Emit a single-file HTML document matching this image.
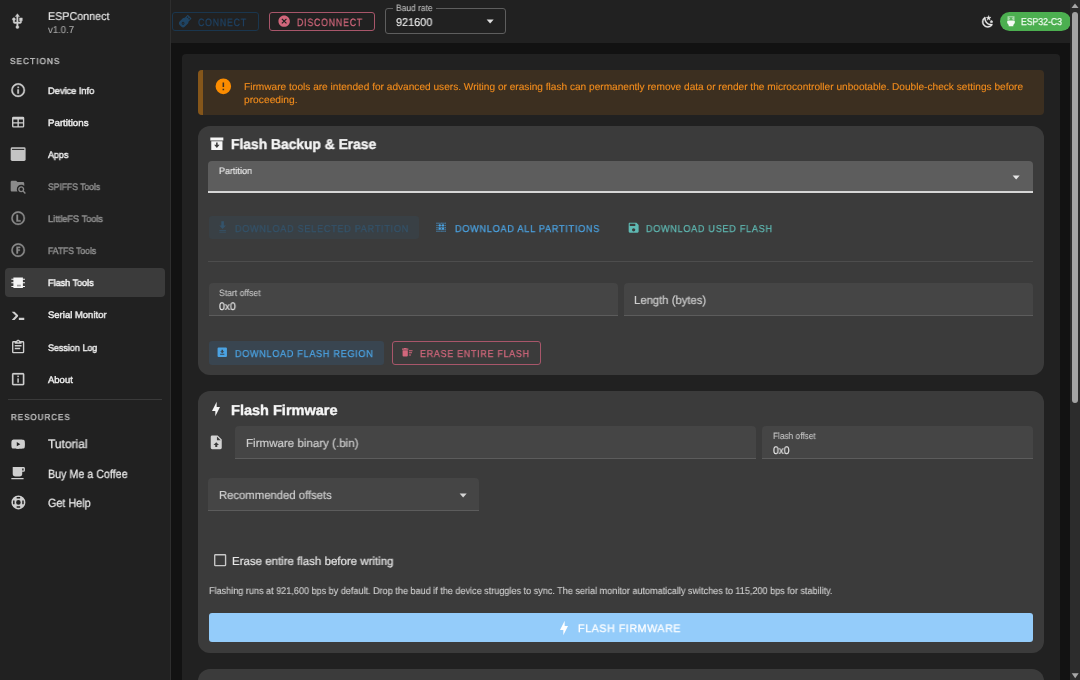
<!DOCTYPE html>
<html><head><meta charset="utf-8">
<style>
*{margin:0;padding:0;box-sizing:border-box}
html,body{width:1080px;height:680px;overflow:hidden;background:#121212;font-family:"Liberation Sans",sans-serif;}
.a{position:absolute}
.t{position:absolute;white-space:nowrap;line-height:1;will-change:transform;text-rendering:geometricPrecision}
svg{position:absolute;display:block;overflow:visible}
</style></head><body>
<!-- sidebar -->
<div class="a" style="left:0;top:0;width:171px;height:680px;background:#212121;border-right:1px solid #2e2e2e"></div>
<!-- app bar -->
<div class="a" style="left:171px;top:0;width:899px;height:43px;background:#212121"></div>
<!-- main -->
<div class="a" style="left:171px;top:43px;width:899px;height:637px;background:#121212"></div>
<div class="a" style="left:182px;top:53.5px;width:877.5px;height:700px;background:#212121;border-radius:4px"></div>

<!-- sidebar content -->
<svg style="left:9.2px;top:12.6px" width="16.8" height="16.8" viewBox="0 0 24 24"><path fill="#cfcfcf" stroke="#cfcfcf" stroke-width="0.6" d="M15,7V11H16V13H13V5H15L12,1L9,5H11V13H8V10.93C8.7,10.56 9.2,9.85 9.2,9C9.2,7.78 8.21,6.8 7,6.8C5.78,6.8 4.8,7.78 4.8,9C4.8,9.85 5.3,10.56 6,10.93V13A2,2 0 0,0 8,15H11V18.05C10.29,18.41 9.8,19.15 9.8,20A2.2,2.2 0 0,0 12,22.2A2.2,2.2 0 0,0 14.2,20C14.2,19.15 13.71,18.41 13,18.05V15H16A2,2 0 0,0 18,13V11H19V7H15Z"/></svg>

<div class="a" style="left:5px;top:268px;width:160px;height:29px;background:#3b3b3b;border-radius:4px"></div>

<!-- nav icons: center y = 90 + 32*i, box 16.3 -->
<svg style="left:10px;top:81.85px" width="16.3" height="16.3" viewBox="0 0 24 24"><path fill="#cfcfcf" stroke="#cfcfcf" stroke-width="0.6" d="M11,9H13V7H11M12,20C7.59,20 4,16.41 4,12C4,7.59 7.59,4 12,4C16.41,4 20,7.59 20,12C20,16.41 16.41,20 12,20M12,2A10,10 0 0,0 2,12A10,10 0 0,0 12,22A10,10 0 0,0 22,12A10,10 0 0,0 12,2M11,17H13V11H11V17Z"/></svg>
<svg style="left:10px;top:113.95px" width="16.3" height="16.3" viewBox="0 0 24 24"><path fill="#cfcfcf" d="M5,4H19A2,2 0 0,1 21,6V18A2,2 0 0,1 19,20H5A2,2 0 0,1 3,18V6A2,2 0 0,1 5,4M5,8V12H11V8H5M13,8V12H19V8H13M5,14V18H11V14H5M13,14V18H19V14H13Z"/></svg>
<svg style="left:10px;top:146.05px" width="16.3" height="16.3" viewBox="0 0 24 24"><rect x="1" y="1.8" width="22" height="20.4" rx="2.2" fill="#c4c4c4"/><rect x="3" y="4.2" width="18" height="1.6" fill="#2a2a2a"/></svg>
<svg style="left:10px;top:178.15px" width="16.3" height="16.3" viewBox="0 0 24 24"><path fill="#8a8a8a" d="M16.5,12C19,12 21,14 21,16.5C21,17.38 20.75,18.21 20.31,18.9L23.39,22L22,23.39L18.88,20.32C18.19,20.75 17.37,21 16.5,21C14,21 12,19 12,16.5C12,14 14,12 16.5,12M16.5,14A2.5,2.5 0 0,0 14,16.5A2.5,2.5 0 0,0 16.5,19A2.5,2.5 0 0,0 19,16.5A2.5,2.5 0 0,0 16.5,14M9,4L11,6H19A2,2 0 0,1 21,8V11.81C19.83,10.69 18.25,10 16.5,10A6.5,6.5 0 0,0 10,16.5C10,17.79 10.37,19 11,20H3C1.89,20 1,19.1 1,18V6C1,4.89 1.89,4 3,4H9Z"/></svg>
<svg style="left:10px;top:210.25px" width="16.3" height="16.3" viewBox="0 0 24 24"><path fill="#8a8a8a" stroke="#8a8a8a" stroke-width="0.5" d="M9.5,7H11.8V15H15.5V17H9.5V7M12,2A10,10 0 0,1 22,12A10,10 0 0,1 12,22A10,10 0 0,1 2,12A10,10 0 0,1 12,2M12,4A8,8 0 0,0 4,12A8,8 0 0,0 12,20A8,8 0 0,0 20,12A8,8 0 0,0 12,4Z"/></svg>
<svg style="left:10px;top:242.35px" width="16.3" height="16.3" viewBox="0 0 24 24"><path fill="#8a8a8a" stroke="#8a8a8a" stroke-width="0.5" d="M9.5,7H15V9H11.8V11H14.5V13H11.8V17H9.5V7M12,2A10,10 0 0,1 22,12A10,10 0 0,1 12,22A10,10 0 0,1 2,12A10,10 0 0,1 12,2M12,4A8,8 0 0,0 4,12A8,8 0 0,0 12,20A8,8 0 0,0 20,12A8,8 0 0,0 12,4Z"/></svg>
<svg style="left:10px;top:274.45px" width="16.3" height="16.3" viewBox="0 0 24 24"><path fill="#f5f5f5" d="M5,5.2H19V6.9H22V8.5H19V12.2H22V13.8H19V17.5H22V19.1H19V20.8H5V19.1H2V17.5H5V13.8H2V12.2H5V8.5H2V6.9H5Z"/><rect x="10.3" y="15.8" width="5.7" height="2.5" fill="#a0a0a0"/></svg>
<svg style="left:10px;top:306.55px" width="16.3" height="16.3" viewBox="0 0 24 24"><path fill="#cfcfcf" d="M13,19V16H21V19H13M8.5,13L2.47,7H6.71L11.67,11.95C12.25,12.5 12.25,13.5 11.67,14.05L6.74,19H2.5L8.5,13Z"/></svg>
<svg style="left:10px;top:338.65px" width="16.3" height="16.3" viewBox="0 0 24 24"><path fill="#cfcfcf" d="M19,3H14.82C14.4,1.84 13.3,1 12,1C10.7,1 9.6,1.84 9.18,3H5A2,2 0 0,0 3,5V19A2,2 0 0,0 5,21H19A2,2 0 0,0 21,19V5A2,2 0 0,0 19,3M12,3A1,1 0 0,1 13,4A1,1 0 0,1 12,5A1,1 0 0,1 11,4A1,1 0 0,1 12,3M7,7H17V5H19V19H5V5H7V7M17,11H7V9H17V11M15,15H7V13H15V15Z"/></svg>
<svg style="left:10px;top:370.75px" width="16.3" height="16.3" viewBox="0 0 24 24"><path fill="#cfcfcf" stroke="#cfcfcf" stroke-width="0.4" d="M13,9H11V7H13M13,17H11V11H13M19,3H5A2,2 0 0,0 3,5V19A2,2 0 0,0 5,21H19A2,2 0 0,0 21,19V5A2,2 0 0,0 19,3M19,19H5V5H19V19Z"/></svg>

<div class="a" style="left:7.5px;top:399px;width:154.5px;height:1px;background:#3a3a3a"></div>
<svg style="left:10px;top:435.7px" width="16.3" height="16.3" viewBox="0 0 24 24"><path fill="#cfcfcf" d="M10,15L15.19,12L10,9V15M21.56,7.17C21.69,7.64 21.78,8.27 21.84,9.07C21.91,9.87 21.94,10.56 21.94,11.16L22,12C22,14.19 21.84,15.8 21.56,16.83C21.31,17.73 20.73,18.31 19.83,18.56C19.36,18.69 18.5,18.78 17.18,18.84C15.88,18.91 14.69,18.94 13.59,18.94L12,19C7.81,19 5.2,18.84 4.17,18.56C3.27,18.31 2.69,17.73 2.44,16.83C2.31,16.36 2.22,15.73 2.16,14.93C2.09,14.13 2.06,13.44 2.06,12.84L2,12C2,9.81 2.16,8.2 2.440,7.17C2.69,6.27 3.27,5.69 4.17,5.44C4.64,5.31 5.5,5.22 6.82,5.16C8.12,5.09 9.310,5.06 10.41,5.06L12,5C16.19,5 18.8,5.16 19.83,5.44C20.73,5.69 21.31,6.27 21.56,7.17Z"/></svg>
<svg style="left:10px;top:465px" width="16.3" height="16.3" viewBox="0 0 24 24"><path fill="#cfcfcf" d="M2,21H20V19H2M20,8H18V5H20M20,3H4V13A4,4 0 0,0 8,17H14A4,4 0 0,0 18,13V10H20A2,2 0 0,0 22,8V5C22,3.89 21.1,3 20,3Z"/></svg>
<svg style="left:9.75px;top:494.2px" width="16.8" height="16.8" viewBox="0 0 24 24"><path fill="#cfcfcf" fill-rule="evenodd" d="M12,2A10,10 0 1,1 12,22A10,10 0 1,1 12,2Z M12,8.7A3.3,3.3 0 1,0 12,15.3A3.3,3.3 0 1,0 12,8.7Z M9.5,4.4H14.5V6.5H9.5Z M9.5,17.5H14.5V19.6H9.5Z M4.4,9.4H6.5V14.6H4.4Z M17.5,9.4H19.6V14.6H17.5Z"/></svg>

<!-- app bar content -->
<div class="a" style="left:171.5px;top:12.2px;width:87px;height:18.7px;border:1px solid #1a364e;border-radius:3px"></div>
<svg style="left:177.2px;top:12.6px" width="16.3" height="16.3" viewBox="0 0 24 24"><g transform="rotate(45 12 12)"><rect x="6.6" y="8.5" width="10.8" height="13.2" rx="4" fill="#1f4463"/><rect x="8" y="2.6" width="8" height="7" rx="0.6" fill="#1f4463"/><rect x="9.4" y="4.4" width="1.9" height="1.9" fill="#212121"/><rect x="12.7" y="4.4" width="1.9" height="1.9" fill="#212121"/><circle cx="12" cy="16.3" r="2.1" fill="#212121"/><circle cx="12" cy="16.3" r="0.9" fill="#1f4463"/></g></svg>

<div class="a" style="left:269px;top:12px;width:106px;height:19px;border:1px solid #a8566a;border-radius:3px"></div>
<svg style="left:276px;top:13.2px" width="16.3" height="16.3" viewBox="0 0 24 24"><path fill="#d2677c" d="M12,3.6C16.64,3.6 20.4,7.36 20.4,12C20.4,16.64 16.64,20.4 12,20.4C7.36,20.4 3.6,16.64 3.6,12C3.6,7.36 7.36,3.6 12,3.6M14.8,8L12,10.8L9.2,8L8,9.2L10.8,12L8,14.8L9.2,16L12,13.2L14.8,16L16,14.8L13.2,12L16,9.2Z"/></svg>

<div class="a" style="left:385.3px;top:8.1px;width:120.5px;height:26.3px;border:1px solid #5e5e5e;border-radius:3px"></div>
<div class="a" style="left:393px;top:6px;width:42.5px;height:4px;background:#212121"></div>
<svg style="left:481.5px;top:13.3px" width="16.3" height="16.3" viewBox="0 0 24 24"><path fill="#dedede" d="M6.8,9.7L12,15.3L17.2,9.7H6.8Z"/></svg>

<svg style="left:980.6px;top:14.5px" width="13.6" height="13.6" viewBox="0 0 24 24"><path fill="#ececec" stroke="#ececec" stroke-width="0.7" d="M17.75,4.09L15.22,6.03L16.13,9.09L13.5,7.28L10.87,9.09L11.78,6.03L9.25,4.09L12.44,4L13.5,1L14.56,4L17.75,4.09M21.25,11L19.610,12.25L20.2,14.23L18.5,13.06L16.8,14.23L17.39,12.25L15.75,11L17.81,10.95L18.5,9L19.19,10.95L21.25,11M18.97,15.95C19.8,15.87 20.69,17.05 20.16,17.8C19.84,18.25 19.5,18.67 19.08,19.07C15.17,23 8.84,23 4.94,19.07C1.03,15.17 1.03,8.830 4.94,4.93C5.34,4.53 5.76,4.17 6.21,3.85C6.96,3.32 8.14,4.21 8.06,5.04C7.79,7.9 8.75,10.87 10.95,13.06C13.14,15.26 16.1,16.22 18.97,15.95M17.33,17.970C14.5,17.81 11.7,16.64 9.53,14.5C7.36,12.31 6.2,9.5 6.04,6.68C3.23,9.82 3.34,14.64 6.35,17.66C9.37,20.67 14.19,20.780 17.33,17.97Z"/></svg>

<div class="a" style="left:1000px;top:12px;width:71px;height:19px;background:#4caf50;border-radius:10px"></div>
<svg style="left:1006.6px;top:15.8px" width="8" height="11" viewBox="0 0 8 11"><path fill="#e8f5e8" fill-opacity="0.6" d="M0.5,0.2H7.5V4.9H0.5Z"/><path fill="#4caf50" fill-opacity="0.9" d="M2,1.2H6L4.7,2.6L6,4H2L3.3,2.6Z"/><path fill="#f4faf4" d="M0.2,4.9H7.8V7.1L6.3,8.9V10.3H1.7V8.9L0.2,7.1Z"/></svg>

<!-- scrollbar -->
<div class="a" style="left:1070px;top:0;width:10px;height:680px;background:#2c2c2c"></div>
<svg style="left:1070px;top:0" width="10" height="10" viewBox="0 0 10 10"><path fill="#a8a8a8" d="M1.5,8H8.5L5,3.5Z"/></svg>
<div class="a" style="left:1072.2px;top:11.5px;width:6px;height:391.5px;background:#a3a3a3;border-radius:3px"></div>
<svg style="left:1070px;top:671px" width="10" height="10" viewBox="0 0 10 10"><path fill="#a8a8a8" d="M1.7,2.2H8.7L5.2,7.2Z"/></svg>

<!-- alert -->
<div class="a" style="left:197.8px;top:69.6px;width:845.9px;height:45.5px;background:#3c2f20;border-radius:4px;overflow:hidden"><div class="a" style="left:0;top:0;width:5.3px;height:100%;background:#85561a"></div></div>
<svg style="left:213.6px;top:77.2px" width="18.7" height="18.7" viewBox="0 0 24 24"><path fill="#fb8c00" d="M13,13H11V7H13M13,17H11V15H13M12,2A10,10 0 0,0 2,12A10,10 0 0,0 12,22A10,10 0 0,0 22,12A10,10 0 0,0 12,2Z"/></svg>

<!-- card 1 -->
<div class="a" style="left:197.8px;top:126px;width:845.9px;height:249.2px;background:#3b3b3b;border-radius:12px"></div>
<svg style="left:208.5px;top:134.5px" width="16" height="16" viewBox="0 0 24 24"><path fill="#f5f5f5" d="M2,3.8H21.5V8.2H2Z M3.4,9.5H20.2V22.6H3.4Z"/><path fill="#3b3b3b" d="M10.6,11.2H13V14.6H15.9L11.8,19.4L7.7,14.6H10.6Z"/></svg>

<div class="a" style="left:208.1px;top:160.7px;width:825px;height:32.6px;background:#5d5d5d;border-radius:4px 4px 0 0;border-bottom:2px solid #d6d6d6"></div>
<svg style="left:1007.9px;top:168.9px" width="16.3" height="16.3" viewBox="0 0 24 24"><path fill="#e6e6e6" d="M6.8,9.7L12,15.3L17.2,9.7H6.8Z"/></svg>

<div class="a" style="left:208.7px;top:216.2px;width:210.8px;height:22.6px;background:#394045;border-radius:3px"></div>
<svg style="left:218px;top:220px" width="10" height="14" viewBox="0 0 10 14"><path fill="#34536b" d="M3.3,1.3H5.9V5.5H7.9L4.6,9L1.3,5.5H3.3Z M1.3,9.9H7.9V10.7H1.3Z M1.3,11.8H7.9V12.6H1.3Z"/></svg>
<svg style="left:436.4px;top:222.2px" width="11" height="11" viewBox="0 0 11 11"><g fill="#4ba3e3"><circle cx="1.0" cy="1.2" r="0.6"/><circle cx="1.0" cy="3.3" r="0.6"/><circle cx="1.0" cy="5.3" r="0.6"/><circle cx="1.0" cy="7.2" r="0.6"/><circle cx="1.0" cy="9.2" r="0.6"/><circle cx="3.0" cy="1.2" r="0.6"/><circle cx="3.0" cy="3.3" r="0.6"/><circle cx="3.0" cy="5.3" r="0.6"/><circle cx="3.0" cy="7.2" r="0.6"/><circle cx="3.0" cy="9.2" r="0.6"/><circle cx="5.1" cy="1.2" r="0.6"/><circle cx="5.1" cy="3.3" r="0.6"/><circle cx="5.1" cy="5.3" r="0.6"/><circle cx="5.1" cy="7.2" r="0.6"/><circle cx="5.1" cy="9.2" r="0.6"/><circle cx="7.0" cy="1.2" r="0.6"/><circle cx="7.0" cy="3.3" r="0.6"/><circle cx="7.0" cy="5.3" r="0.6"/><circle cx="7.0" cy="7.2" r="0.6"/><circle cx="7.0" cy="9.2" r="0.6"/><circle cx="9.1" cy="1.2" r="0.6"/><circle cx="9.1" cy="3.3" r="0.6"/><circle cx="9.1" cy="5.3" r="0.6"/><circle cx="9.1" cy="7.2" r="0.6"/><circle cx="9.1" cy="9.2" r="0.6"/><circle cx="3.8" cy="3.5" r="1.15"/><circle cx="7.0" cy="3.5" r="1.15"/><circle cx="3.8" cy="6.7" r="1.15"/><circle cx="7.0" cy="6.7" r="1.15"/></g></svg>
<svg style="left:627.2px;top:220.6px" width="13.3" height="13.3" viewBox="0 0 24 24"><path fill="#5fb9b3" d="M15,9H5V5H15M12,19A3,3 0 0,1 9,16A3,3 0 0,1 12,13A3,3 0 0,1 15,16A3,3 0 0,1 12,19M17,3H5C3.89,3 3,3.9 3,5V19A2,2 0 0,0 5,21H19A2,2 0 0,0 21,19V7L17,3Z"/></svg>

<div class="a" style="left:208.1px;top:261px;width:825px;height:1px;background:#4d4d4d"></div>

<div class="a" style="left:208.5px;top:283px;width:409.7px;height:33px;background:#454545;border-radius:4px 4px 0 0;border-bottom:1.5px solid #5c5c5c"></div>
<div class="a" style="left:623.5px;top:283px;width:409.5px;height:33px;background:#454545;border-radius:4px 4px 0 0;border-bottom:1.5px solid #5c5c5c"></div>

<div class="a" style="left:208.5px;top:341px;width:175.8px;height:23.5px;background:#394550;border-radius:3px"></div>
<svg style="left:216.4px;top:346.3px" width="12.5" height="12.5" viewBox="0 0 24 24"><path fill="#4ba3e3" d="M5,3H19A2,2 0 0,1 21,5V19A2,2 0 0,1 19,21H5A2,2 0 0,1 3,19V5A2,2 0 0,1 5,3M8,17H16V15H8V17M16,10H13.5V7H10.5V10H8L12,14L16,10Z"/></svg>
<div class="a" style="left:392px;top:341px;width:148.5px;height:23.5px;border:1px solid #a8566a;border-radius:3px"></div>
<svg style="left:400.5px;top:345.9px" width="12.6" height="12.6" viewBox="0 0 24 24"><path fill="#d2677c" d="M15,16H19V18H15V16M15,8H22V10H15V8M15,12H21V14H15V12M3,18A2,2 0 0,0 5,20H11A2,2 0 0,0 13,18V8H3V18M14,5H11L10,4H6L5,5H2V7H14V5Z"/></svg>

<!-- card 2 -->
<div class="a" style="left:197.8px;top:391px;width:845.9px;height:261.6px;background:#3b3b3b;border-radius:12px"></div>
<svg style="left:208px;top:401.2px" width="16" height="16" viewBox="0 0 24 24"><path fill="#f5f5f5" d="M11,15H6L13,1V9H18L11,23V15Z"/></svg>
<svg style="left:208.2px;top:433.8px" width="16.5" height="16.5" viewBox="0 0 24 24"><path fill="#d4d4d4" d="M14,2L20,8V20A2,2 0 0,1 18,22H6A2,2 0 0,1 4,20V4A2,2 0 0,1 6,2H14M13,9H18.5L13,3.5V9M12,12L8,16H10.5V19H13.5V16H16L12,12Z"/></svg>

<div class="a" style="left:235.2px;top:426.3px;width:521.1px;height:32.7px;background:#454545;border-radius:4px 4px 0 0;border-bottom:1.5px solid #5c5c5c"></div>
<div class="a" style="left:761.9px;top:426.3px;width:271.1px;height:32.7px;background:#454545;border-radius:4px 4px 0 0;border-bottom:1.5px solid #5c5c5c"></div>

<div class="a" style="left:208.1px;top:478.3px;width:271.2px;height:32.7px;background:#454545;border-radius:4px 4px 0 0;border-bottom:1.5px solid #5c5c5c"></div>
<svg style="left:455.3px;top:486.8px" width="16.3" height="16.3" viewBox="0 0 24 24"><path fill="#d4d4d4" d="M6.8,9.7L12,15.3L17.2,9.7H6.8Z"/></svg>

<svg style="left:212px;top:552px" width="16.3" height="16.3" viewBox="0 0 24 24"><path fill="#c8c8c8" d="M19,3H5C3.89,3 3,3.89 3,5V19A2,2 0 0,0 5,21H19A2,2 0 0,0 21,19V5C21,3.89 20.1,3 19,3M19,5V19H5V5H19Z"/></svg>

<div class="a" style="left:208.5px;top:612.6px;width:824.6px;height:29.3px;background:#94ccfa;border-radius:3px"></div>
<svg style="left:556px;top:620px" width="16" height="16" viewBox="0 0 24 24"><path fill="#ffffff" d="M11,15H6L13,1V9H18L11,23V15Z"/></svg>

<!-- card 3 -->
<div class="a" style="left:197.8px;top:668.8px;width:845.9px;height:100px;background:#3b3b3b;border-radius:12px"></div>

<div class="t" style="left:47.50px;top:12.000px;font-size:11.30px;font-weight:normal;color:#e8e8e8;-webkit-text-stroke:0.15px #e8e8e8;transform:scaleX(0.9505);transform-origin:0 0;">ESPConnect</div>
<div class="t" style="left:47.50px;top:26.000px;font-size:10.00px;font-weight:normal;color:#a9a9a9;-webkit-text-stroke:0.1px #a9a9a9;transform:scaleX(0.9574);transform-origin:0 0;">v1.0.7</div>
<div class="t" style="left:10.20px;top:57.000px;font-size:8.60px;font-weight:normal;color:#bdbdbd;letter-spacing:1.118px;-webkit-text-stroke:0.4px #bdbdbd;transform:scaleX(0.9534);transform-origin:0 0;">SECTIONS</div>
<div class="t" style="left:47.50px;top:87.000px;font-size:9.50px;font-weight:normal;color:#ebebeb;-webkit-text-stroke:0.45px #ebebeb;transform:scaleX(0.9738);transform-origin:0 0;">Device Info</div>
<div class="t" style="left:47.50px;top:119.000px;font-size:9.50px;font-weight:normal;color:#ebebeb;-webkit-text-stroke:0.45px #ebebeb;transform:scaleX(1.0226);transform-origin:0 0;">Partitions</div>
<div class="t" style="left:47.50px;top:151.000px;font-size:9.50px;font-weight:normal;color:#ebebeb;-webkit-text-stroke:0.45px #ebebeb;transform:scaleX(0.9405);transform-origin:0 0;">Apps</div>
<div class="t" style="left:47.50px;top:183.000px;font-size:9.50px;font-weight:normal;color:#8e8e8e;-webkit-text-stroke:0.45px #8e8e8e;transform:scaleX(0.9002);transform-origin:0 0;">SPIFFS Tools</div>
<div class="t" style="left:47.50px;top:215.000px;font-size:9.50px;font-weight:normal;color:#8e8e8e;-webkit-text-stroke:0.45px #8e8e8e;transform:scaleX(0.9673);transform-origin:0 0;">LittleFS Tools</div>
<div class="t" style="left:47.50px;top:247.000px;font-size:9.50px;font-weight:normal;color:#8e8e8e;-webkit-text-stroke:0.45px #8e8e8e;transform:scaleX(0.8995);transform-origin:0 0;">FATFS Tools</div>
<div class="t" style="left:47.50px;top:279.000px;font-size:9.50px;font-weight:normal;color:#f5f5f5;-webkit-text-stroke:0.45px #f5f5f5;transform:scaleX(0.9524);transform-origin:0 0;">Flash Tools</div>
<div class="t" style="left:47.50px;top:311.000px;font-size:9.50px;font-weight:normal;color:#ebebeb;-webkit-text-stroke:0.45px #ebebeb;transform:scaleX(0.9976);transform-origin:0 0;">Serial Monitor</div>
<div class="t" style="left:47.50px;top:344.000px;font-size:9.50px;font-weight:normal;color:#ebebeb;-webkit-text-stroke:0.45px #ebebeb;transform:scaleX(0.9422);transform-origin:0 0;">Session Log</div>
<div class="t" style="left:47.50px;top:376.000px;font-size:9.50px;font-weight:normal;color:#ebebeb;-webkit-text-stroke:0.45px #ebebeb;transform:scaleX(0.9966);transform-origin:0 0;">About</div>
<div class="t" style="left:10.60px;top:413.000px;font-size:8.60px;font-weight:normal;color:#bdbdbd;letter-spacing:1.118px;-webkit-text-stroke:0.4px #bdbdbd;transform:scaleX(0.9254);transform-origin:0 0;">RESOURCES</div>
<div class="t" style="left:48.00px;top:438.000px;font-size:12.20px;font-weight:normal;color:#e8e8e8;-webkit-text-stroke:0.25px #e8e8e8;transform:scaleX(0.9828);transform-origin:0 0;">Tutorial</div>
<div class="t" style="left:48.00px;top:469.000px;font-size:11.90px;font-weight:normal;color:#e8e8e8;-webkit-text-stroke:0.25px #e8e8e8;transform:scaleX(0.9015);transform-origin:0 0;">Buy Me a Coffee</div>
<div class="t" style="left:48.00px;top:498.000px;font-size:11.90px;font-weight:normal;color:#e8e8e8;-webkit-text-stroke:0.25px #e8e8e8;transform:scaleX(0.9089);transform-origin:0 0;">Get Help</div>
<div class="t" style="left:198.00px;top:18.000px;font-size:10.60px;font-weight:normal;color:#1f4365;letter-spacing:1.060px;-webkit-text-stroke:0.25px #1f4365;transform:scaleX(0.8183);transform-origin:0 0;">CONNECT</div>
<div class="t" style="left:296.60px;top:18.000px;font-size:10.60px;font-weight:normal;color:#d2677c;letter-spacing:1.060px;-webkit-text-stroke:0.25px #d2677c;transform:scaleX(0.8189);transform-origin:0 0;">DISCONNECT</div>
<div class="t" style="left:396.00px;top:4.000px;font-size:9.20px;font-weight:normal;color:#bcbcbc;-webkit-text-stroke:0.1px #bcbcbc;transform:scaleX(0.9187);transform-origin:0 0;">Baud rate</div>
<div class="t" style="left:396.00px;top:18.000px;font-size:11.40px;font-weight:normal;color:#ececec;-webkit-text-stroke:0.12px #ececec;transform:scaleX(0.9555);transform-origin:0 0;">921600</div>
<div class="t" style="left:1020.70px;top:18.000px;font-size:10.00px;font-weight:normal;color:#f2fbf2;-webkit-text-stroke:0.25px #f2fbf2;transform:scaleX(0.8661);transform-origin:0 0;">ESP32-C3</div>
<div class="t" style="left:243.50px;top:83.000px;font-size:10.00px;font-weight:normal;color:#f28c1c;-webkit-text-stroke:0.12px #f28c1c;transform:scaleX(1.0115);transform-origin:0 0;">Firmware tools are intended for advanced users. Writing or erasing flash can permanently remove data or render the microcontroller unbootable. Double-check settings before</div>
<div class="t" style="left:243.50px;top:96.000px;font-size:10.00px;font-weight:normal;color:#f28c1c;-webkit-text-stroke:0.12px #f28c1c;transform:scaleX(1.0256);transform-origin:0 0;">proceeding.</div>
<div class="t" style="left:230.80px;top:138.000px;font-size:14.20px;font-weight:bold;color:#f5f5f5;-webkit-text-stroke:0.4px #f5f5f5;transform:scaleX(0.9742);transform-origin:0 0;">Flash Backup &amp; Erase</div>
<div class="t" style="left:219.40px;top:166.000px;font-size:9.40px;font-weight:normal;color:#ececec;-webkit-text-stroke:0.15px #ececec;transform:scaleX(0.9568);transform-origin:0 0;">Partition</div>
<div class="t" style="left:235.00px;top:225.000px;font-size:10.00px;font-weight:normal;color:#34536b;letter-spacing:0.800px;-webkit-text-stroke:0.25px #34536b;transform:scaleX(0.9094);transform-origin:0 0;">DOWNLOAD SELECTED PARTITION</div>
<div class="t" style="left:454.50px;top:225.000px;font-size:10.00px;font-weight:normal;color:#4ba3e3;letter-spacing:0.800px;-webkit-text-stroke:0.25px #4ba3e3;transform:scaleX(0.9136);transform-origin:0 0;">DOWNLOAD ALL PARTITIONS</div>
<div class="t" style="left:646.00px;top:225.000px;font-size:10.00px;font-weight:normal;color:#5fb9b3;letter-spacing:0.800px;-webkit-text-stroke:0.25px #5fb9b3;transform:scaleX(0.9067);transform-origin:0 0;">DOWNLOAD USED FLASH</div>
<div class="t" style="left:219.20px;top:289.000px;font-size:9.20px;font-weight:normal;color:#c8c8c8;-webkit-text-stroke:0.1px #c8c8c8;transform:scaleX(0.9395);transform-origin:0 0;">Start offset</div>
<div class="t" style="left:219.30px;top:302.000px;font-size:11.00px;font-weight:normal;color:#ececec;-webkit-text-stroke:0.12px #ececec;transform:scaleX(0.9536);transform-origin:0 0;">0x0</div>
<div class="t" style="left:634.30px;top:295.000px;font-size:11.60px;font-weight:normal;color:#cecece;-webkit-text-stroke:0.2px #cecece;transform:scaleX(0.9737);transform-origin:0 0;">Length (bytes)</div>
<div class="t" style="left:235.00px;top:350.000px;font-size:10.00px;font-weight:normal;color:#4ba3e3;letter-spacing:0.800px;-webkit-text-stroke:0.25px #4ba3e3;transform:scaleX(0.9052);transform-origin:0 0;">DOWNLOAD FLASH REGION</div>
<div class="t" style="left:419.50px;top:350.000px;font-size:10.00px;font-weight:normal;color:#d2677c;letter-spacing:0.800px;-webkit-text-stroke:0.25px #d2677c;transform:scaleX(0.8937);transform-origin:0 0;">ERASE ENTIRE FLASH</div>
<div class="t" style="left:230.80px;top:404.000px;font-size:14.20px;font-weight:bold;color:#f5f5f5;-webkit-text-stroke:0.4px #f5f5f5;transform:scaleX(1.0241);transform-origin:0 0;">Flash Firmware</div>
<div class="t" style="left:246.30px;top:438.000px;font-size:11.60px;font-weight:normal;color:#cecece;-webkit-text-stroke:0.2px #cecece;transform:scaleX(0.9966);transform-origin:0 0;">Firmware binary (.bin)</div>
<div class="t" style="left:772.90px;top:432.000px;font-size:9.20px;font-weight:normal;color:#c8c8c8;-webkit-text-stroke:0.1px #c8c8c8;transform:scaleX(0.9001);transform-origin:0 0;">Flash offset</div>
<div class="t" style="left:772.80px;top:446.000px;font-size:11.00px;font-weight:normal;color:#ececec;-webkit-text-stroke:0.12px #ececec;transform:scaleX(0.9422);transform-origin:0 0;">0x0</div>
<div class="t" style="left:219.30px;top:490.000px;font-size:11.60px;font-weight:normal;color:#cecece;-webkit-text-stroke:0.2px #cecece;transform:scaleX(0.9742);transform-origin:0 0;">Recommended offsets</div>
<div class="t" style="left:232.40px;top:556.000px;font-size:11.60px;font-weight:normal;color:#e6e6e6;-webkit-text-stroke:0.18px #e6e6e6;transform:scaleX(0.9902);transform-origin:0 0;">Erase entire flash before writing</div>
<div class="t" style="left:208.90px;top:587.000px;font-size:9.80px;font-weight:normal;color:#d0d0d0;-webkit-text-stroke:0.12px #d0d0d0;transform:scaleX(0.9271);transform-origin:0 0;">Flashing runs at 921,600 bps by default. Drop the baud if the device struggles to sync. The serial monitor automatically switches to 115,200 bps for stability.</div>
<div class="t" style="left:578.20px;top:624.000px;font-size:10.90px;font-weight:normal;color:#ffffff;letter-spacing:0.545px;-webkit-text-stroke:0.25px #ffffff;transform:scaleX(0.9843);transform-origin:0 0;">FLASH FIRMWARE</div>
</body></html>
